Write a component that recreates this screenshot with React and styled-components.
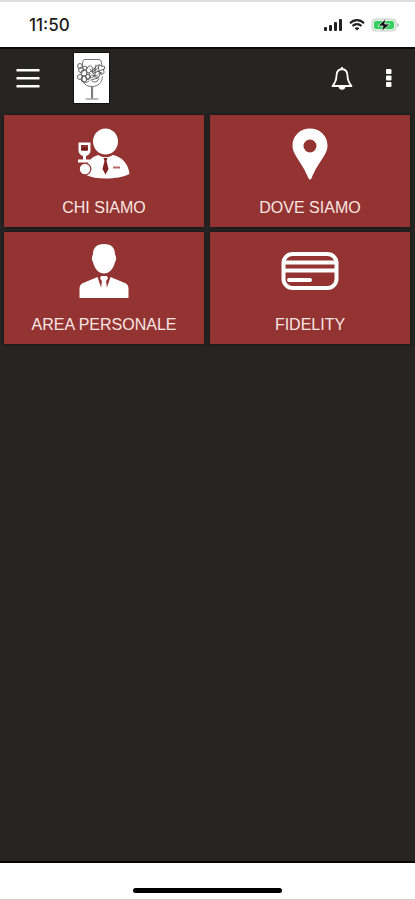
import React from 'react'
import styled, { createGlobalStyle } from 'styled-components'

const GlobalStyle = createGlobalStyle`
    * {
        box-sizing: border-box;
    }

    body {
        margin: 0;
        background: #262523;
        font-family: "Liberation Sans", Arial, sans-serif;
    }
`;

const Screen = styled.div`
    display: flex;
    flex-direction: column;
    min-height: 100vh;
    background: #262523;
`;

const StatusBar = styled.div`
    display: flex;
    align-items: center;
    justify-content: space-between;
    height: 47px;
    padding: 0 16px 0 29px;
    border-top: 2px solid #dedede;
    background: #fff;
`;

const Time = styled.time`
    color: #1c1c1c;
    font-family: Inter, sans-serif;
    font-size: 17px;
    font-weight: 500;
    line-height: 20px;
`;

const StatusIcons = styled.div`
    display: flex;
    align-items: center;
    gap: 6px;
`;

const Header = styled.header`
    display: flex;
    align-items: center;
    justify-content: space-between;
    height: 60px;
    padding: 0 14px;
    border-top: 2px solid #0b0b0a;
`;

const HeaderGroup = styled.div`
    display: flex;
    align-items: center;
    gap: ${props => props.$gap};
`;

const IconButton = styled.button`
    display: flex;
    align-items: center;
    justify-content: center;
    width: ${props => props.$width};
    height: 32px;
    padding: 0;
    border: 0;
    background: none;
    color: #fff;
    cursor: pointer;
`;

const Logo = styled.a`
    display: flex;
    border: 1px solid #111;
    background: #fff;
`;

const Grid = styled.main`
    display: grid;
    grid-template-columns: 1fr 1fr;
    align-content: start;
    gap: 5px 6px;
    flex: 1;
    padding: 8px 5px 5px 4px;
`;

const Tile = styled.button`
    display: flex;
    flex-direction: column;
    align-items: center;
    gap: 16px;
    height: 112px;
    padding: 11px 4px 0;
    border: 0;
    background: #933433;
    box-shadow: 0 0 3px #111;
    color: #fae6e2;
    font-family: inherit;
    cursor: pointer;
`;

const TileIcon = styled.span`
    display: flex;
    align-items: center;
    justify-content: center;
    height: 56px;
    color: #fff;
`;

const TileLabel = styled.span`
    font-size: 16px;
    line-height: 20px;
    white-space: nowrap;
`;

const HomeBar = styled.footer`
    display: flex;
    align-items: flex-end;
    justify-content: center;
    height: 39px;
    padding-bottom: 6px;
    border-top: 2px solid #050505;
    border-bottom: 1px solid #cfcfcf;
    background: #fff;
`;

const HomeIndicator = styled.div`
    width: 36%;
    height: 5px;
    border-radius: 3px;
    background: #000;
`;

const SignalIcon = () => (
    <svg width="20" height="14" viewBox="0 0 20 14" fill="#222">
        <rect x="1" y="9" width="3" height="4" rx="1" />
        <rect x="6" y="7" width="3" height="6" rx="1" />
        <rect x="11" y="4" width="3" height="9" rx="1" />
        <rect x="16" y="1" width="3" height="12" rx="1" />
    </svg>
)

const WifiIcon = () => (
    <svg width="16" height="14" viewBox="0 0 16 14" fill="none" stroke="#222" strokeWidth="2.1">
        <path d="M1 5.2C5 1.1 11 1.1 15 5.2" />
        <path d="M3.5 8.1C6 5.5 10 5.5 12.5 8.1" />
        <path d="M8 12.6L5.6 10.2C7 9 9 9 10.4 10.2Z" fill="#222" stroke="none" />
    </svg>
)

const BatteryIcon = () => (
    <svg width="28" height="14" viewBox="0 0 28 14">
        <rect x="1" y="1" width="24" height="12" rx="3.5" fill="#e4efe5" stroke="#c6d0c7" />
        <rect x="3" y="3" width="20" height="8" rx="2" fill="#35cf62" />
        <path d="M26.500 5V9C28 8.500 28 5.500 26.500 5Z" fill="#999" />
        <path d="M15 0.500L7 8H12L10.500 13.500L19 6H13.700Z" fill="#111" stroke="#e9f8ec" strokeWidth="0.8" />
    </svg>
)

const MenuIcon = () => (
    <svg width="24" height="20" viewBox="0 0 24 20" fill="currentColor">
        <path d="M0.500 1H23.500V3.500H0.500ZM0.500 9H23.500V11.500H0.500ZM0.500 17H23.500V19.500H0.500Z" />
    </svg>
)

const BellIcon = () => (
    <svg width="22" height="24" viewBox="0 0 22 24" fill="none" stroke="currentColor" strokeWidth="1.8" strokeLinejoin="round">
        <path d="M11 3C7 3.500 5.500 6 5.500 9.500C5.500 14.500 4.500 16.500 1.500 20H20.500C17.500 16.500 16.500 14.500 16.500 9.500C16.500 6 15 3.500 11 3Z" />
        <path d="M8.500 20.500C8.500 23.500 13.500 23.500 13.500 20.500Z" fill="currentColor" />
        <path d="M11 1V3" />
    </svg>
)

const DotsIcon = () => (
    <svg width="6" height="20" viewBox="0 0 6 20" fill="currentColor">
        <rect x="0" y="1" width="5.500" height="5" rx="1" />
        <rect x="0" y="7.500" width="5.500" height="5" rx="1" />
        <rect x="0" y="14" width="5.500" height="5" rx="1" />
    </svg>
)

const GlassLogo = () => (
    <svg width="35" height="50" viewBox="0 0 35 50" fill="none" stroke="#666" strokeWidth="0.9" strokeLinecap="round">
        <path d="M8 13L9 8Q9.500 6.500 11 6.500H25Q26.500 6.500 27 8L28 13" />
        <path d="M8 25C8.500 30 12 33.500 18 33.500C24 33.500 28 30 28.500 24" />
        <path d="M17.500 34V45M18.600 34V45M12 46H24" />
        <g stroke="#555">
            <circle cx="6" cy="13" r="2.5" />
            <circle cx="7" cy="17" r="2.5" />
            <circle cx="10" cy="20" r="3" />
            <circle cx="6" cy="24" r="2.5" />
            <circle cx="10" cy="26" r="3" />
            <circle cx="14" cy="24" r="2.5" />
            <circle cx="11" cy="15" r="2" />
            <path d="M14 14C17 10 20 16 18 19C22 12 26 10 28 14C31 11 32 16 29 17C32 20 28 23 25 20C27 25 22 27 20 22C19 27 14 24 16 20C12 20 11 16 14 14Z" />
            <path d="M16 16L20 21M18 20L25 14M20 20L30 16M18 22L24 23M21 17L22 12M23 18L28 20M15 20L18 17M13 27L17 23M17 27L24 25" />
            <path d="M20 15Q23 19 20 24M25 12Q23 16 27 21M8 28Q12 31 15 28M18 28Q22 31 25 26" />
        </g>
    </svg>
)

const SommelierIcon = () => (
    <svg width="52" height="52" viewBox="0 0 52 52" fill="currentColor">
        <path d="M20.500 27C24 30 31 30 34.500 27C44 28.500 50.500 36 51.500 46C46 49 36 50.500 28 50.500C20 50.500 13 49.500 8 47L10 35C13 30 16 28 20.500 27Z" />
        <ellipse cx="27.5" cy="13.5" rx="12.5" ry="13" />
        <path d="M25.500 30H29.500L28.500 33L30.500 41L27.500 46.500L24.500 41L26.500 33Z" fill="#842322" />
        <path d="M35 38.500H42V40.500H35Z" fill="#b76967" />
        <circle cx="7" cy="41" r="5.8" stroke="#933433" strokeWidth="1.2" />
        <path d="M0.500 14.500H12.500V22.500C12.500 25.500 10.500 27 8 28V31.500H12V34.500H0V31.500H5V28C2.500 27 0.500 25.500 0.500 22.500Z" />
        <path d="M3 17H10V22.500H3Z" fill="#933433" />
        <path d="M3.500 19.500H9.500V22.500H3.500Z" fill="#6e1918" />
    </svg>
)

const PinIcon = () => (
    <svg width="36" height="52" viewBox="0 0 36 52" fill="currentColor">
        <path fillRule="evenodd" d="M18 0.500C8 0.500 0.500 8 0.500 17.500C0.500 27 10 34 16.300 50Q18 53 19.700 50C26 34 35.500 27 35.500 17.500C35.500 8 28 0.500 18 0.500ZM18 11.500A6.500 6.500 0 1 1 18 24.500A6.500 6.500 0 1 1 18 11.500Z" />
    </svg>
)

const PersonIcon = () => (
    <svg width="50" height="54" viewBox="0 0 50 54" fill="currentColor">
        <path d="M25 0C17.500 0 14 4 14 10L13 13Q12.500 16 14 18C15.500 25 20 29.500 25 29.500C30 29.500 34.500 25 36 18Q37.500 16 37 13L36 10C36 4 32.500 0 25 0Z" />
        <path d="M18.500 33L3 39.500Q0.500 41 0.500 44V54H49.500V44Q49.500 41 47 39.500L31.500 33L27.500 45L27 37L29 34.500L28 32H22L21 34.500L23 37L22.500 45Z" />
        <path d="M23 37H27L28 45L25 53L22 45Z" />
    </svg>
)

const CardIcon = () => (
    <svg width="58" height="40" viewBox="0 0 58 40" fill="none" stroke="currentColor" strokeWidth="4">
        <rect x="2.5" y="3" width="53" height="34" rx="9" />
        <path d="M3 11.500H55M3 19.500H55" />
        <path d="M8 29H29" strokeLinecap="round" />
    </svg>
)

const tiles = [
    { id: 'chi-siamo', label: 'CHI SIAMO', Icon: SommelierIcon },
    { id: 'dove-siamo', label: 'DOVE SIAMO', Icon: PinIcon },
    { id: 'area-personale', label: 'AREA PERSONALE', Icon: PersonIcon },
    { id: 'fidelity', label: 'FIDELITY', Icon: CardIcon },
]

export default function App() {
    return (
        <Screen>
            <GlobalStyle />
            <StatusBar>
                <Time>11:50</Time>
                <StatusIcons>
                    <SignalIcon />
                    <WifiIcon />
                    <BatteryIcon />
                </StatusIcons>
            </StatusBar>
            <Header>
                <HeaderGroup $gap="32px">
                    <IconButton $width="27px" aria-label="Menu"><MenuIcon /></IconButton>
                    <Logo href="#" aria-label="Home"><GlassLogo /></Logo>
                </HeaderGroup>
                <HeaderGroup $gap="22px">
                    <IconButton $width="26px" aria-label="Notifiche"><BellIcon /></IconButton>
                    <IconButton $width="24px" aria-label="Altro"><DotsIcon /></IconButton>
                </HeaderGroup>
            </Header>
            <Grid>
                {tiles.map(({ id, label, Icon }) => (
                    <Tile key={id} type="button">
                        <TileIcon><Icon /></TileIcon>
                        <TileLabel>{label}</TileLabel>
                    </Tile>
                ))}
            </Grid>
            <HomeBar>
                <HomeIndicator />
            </HomeBar>
        </Screen>
    )
}
